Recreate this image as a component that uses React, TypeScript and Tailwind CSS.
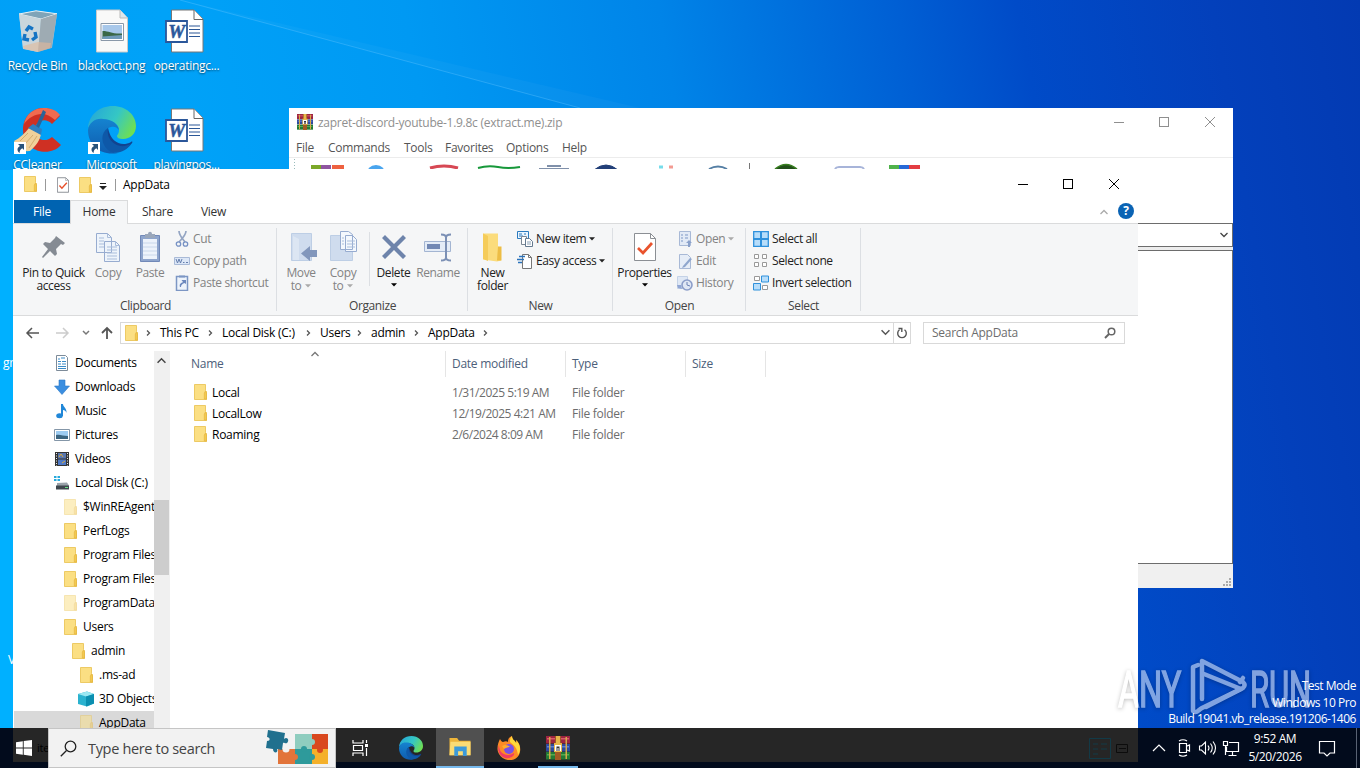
import type { ReactNode } from 'react';
import clsx from 'clsx';

type IconProps = { className?: string };

function Folder({ className, faded }: IconProps & { faded?: boolean }) {
  return (
    <svg viewBox="0 0 16 16" className={clsx('h-4 w-4 shrink-0', faded && 'opacity-50', className)} aria-hidden>
      <path d="M1.500.5h11v6l1 1v8h-12z" fill="#fbdf83" stroke="#e9c04c" strokeWidth=".8" />
      <path d="M11.300 15V9l1.200-2 1 2v6.200z" fill="#f3c94f" stroke="#e0b03c" strokeWidth=".6" />
    </svg>
  );
}

function Chevron({ dir = 'right', className }: IconProps & { dir?: 'right' | 'down' | 'up' }) {
  const paths = { right: 'M3 1.5 5.5 4 3 6.5', down: 'M.5 2 4 5.5 7.5 2', up: 'M.5 6 4 2.5 7.5 6' };
  return (
    <svg viewBox="0 0 8 8" className={clsx('h-2 w-2 shrink-0', className)} fill="none" stroke="currentColor" strokeWidth="1.3" aria-hidden>
      <path d={paths[dir]} />
    </svg>
  );
}

function Caret({ className }: IconProps) {
  return (
    <svg viewBox="0 0 6 4" className={clsx('h-[4px] w-[6px] shrink-0', className)} fill="currentColor" aria-hidden>
      <path d="M0 .3h6L3 3.5z" />
    </svg>
  );
}

function CheckPage({ className }: IconProps) {
  return (
    <svg viewBox="0 0 22 28" className={className} fill="none" aria-hidden>
      <path d="M.7.7h15l5.600 5v21.600H.7z" fill="#fff" stroke="#777c83" strokeWidth="1.500" />
      <path d="M15.700.7v5h5.600" stroke="#8a8f96" />
      <path d="m4.500 15 4.500 5L18 10" stroke="#e8502a" strokeWidth="2.500" />
    </svg>
  );
}

function WinRar({ className }: IconProps) {
  return (
    <svg viewBox="0 0 24 24" className={className} aria-hidden>
      <path fill="#9c2540" d="M0 0h24v7.500H0z" />
      <path fill="#2f4a9c" d="M0 8h24v7.500H0z" />
      <path fill="#237a34" d="M0 16h24v7.500H0z" />
      <path fill="#d85c6c" d="M1 2h22v1.500H1z" />
      <path fill="#5c7fd4" d="M1 10h22v1.500H1z" />
      <path fill="#58a84e" d="M1 18h22v1.500H1z" />
      <path fill="#d8a848" d="M3 1h1.500v22H3zM19.500 1H21v22h-1.500z" />
      <path fill="#a05a24" d="M9 0h6v24H9z" />
      <path fill="#e8b64a" d="M10 0h4v7h-4zM8 7h8v9H8z" />
      <path fill="#fff" d="M9 9h6v6H9z" />
      <path fill="#333" d="M10.500 10.500h3V15h-1v-3h-1v3h-1z" />
    </svg>
  );
}

function EdgeLogo({ className }: IconProps) {
  return (
    <svg viewBox="0 0 48 48" className={className} aria-hidden>
      <defs>
        <linearGradient id="edgeTop" x1="0" x2="1" y1=".2" y2=".6">
          <stop offset="0" stopColor="#25a7d8" />
          <stop offset=".55" stopColor="#35c7c4" />
          <stop offset="1" stopColor="#6fdf52" />
        </linearGradient>
        <linearGradient id="edgeLow" x1="0" x2="0" y1="0" y2="1">
          <stop offset="0" stopColor="#1583d0" />
          <stop offset="1" stopColor="#0f5cae" />
        </linearGradient>
      </defs>
      <path fill="url(#edgeTop)" d="M0 22C1 9 11 0 25 0c13 0 23 9 23 20 0 8-6 13-13 13-4 0-6-1-6-3 0-1 2-2 2-6 0-5-5-9-11-9C12 12 4 15 0 22z" />
      <path fill="url(#edgeLow)" d="M0 24c1-7 7-12 15-11 9 0 15 5 16 11-2-3-5-4-8-3-8 2-9 12-4 19 3 4 7 7 11 7C13 50 0 40 0 24z" />
      <path fill="#12438f" d="M20 22c-5 6-3 15 4 20 6 4 14 3 20-5 1-1 0-2-1-1-9 5-20 1-23-14z" />
      <path fill="#0e58a8" d="M20 22c-8 5-7 16 0 22 7 5 17 3 24-7-6 4-12 4-17 1-6-4-8-9-7-16z" />
    </svg>
  );
}

function WordDoc() {
  return (
    <svg viewBox="0 0 40 44" className="mr-[3px] h-11 w-10" aria-hidden>
      <path d="M6.500 1h22.500l9 9v33H6.500z" fill="#fff" stroke="#777" />
      <path d="M29 1v9.500h9" fill="#fff" stroke="#666" />
      <path d="M24 17h11M24 20.500h11M24 24h11M24 27.500h11" stroke="#2b5797" />
      <path d="M1 12h21v21H1z" fill="#fff" stroke="#2b579a" strokeWidth="1.800" />
      <text x="11.500" y="28.500" textAnchor="middle" fontFamily="Liberation Serif, serif" fontWeight="bold" fontStyle="italic" fontSize="19" fill="#2b579a" stroke="#2b579a" strokeWidth=".5">W</text>
    </svg>
  );
}

function PngFile() {
  return (
    <svg viewBox="0 0 32 44" className="h-11 w-8" aria-hidden>
      <path d="M.5 1H24l7.500 8v34H.5z" fill="#f9f9f8" stroke="#c9c9c9" />
      <path d="M24 1v8h7.500" fill="#dde7ec" stroke="#bbb" />
      <path d="M5 14.500h22.500v17H5z" fill="#fff" stroke="#8a98a8" />
      <path d="M6.500 16H26v14H6.500z" fill="#a8c8ea" />
      <path d="M6.500 22c7 0 9 3 19.500 2.500V30H6.500z" fill="#3b6847" />
      <path d="M6.500 27.500 26 26v4H6.500z" fill="#6f9ab8" />
    </svg>
  );
}

function RecycleBin() {
  return (
    <svg viewBox="0 0 40 44" className="mt-px h-11 w-10" aria-hidden>
      <path d="M1 4 18 .8l21 3-5 34-15 4L5 39z" fill="#b9c9d2" opacity=".9" />
      <path d="M1 4 18 .8l21 3L23 9z" fill="#7fa4b8" stroke="#e6f1f6" />
      <path d="M1 4 23 9l-3 33L5 38.500z" fill="#c9d6dc" />
      <path d="M23 9 39 4l-5.500 34L20 42z" fill="#9eabb3" />
      <path d="m5 36 15-4 13 1-1 5-12 4-14-3z" fill="#e2b99a" opacity=".6" />
      <g fill="none" stroke="#1474c4" strokeWidth="3.400">
        <path d="m8 21 3-4 4 2M17 22l1 5-4 3M11 30l-5-1 1-5" />
      </g>
    </svg>
  );
}

function ShortcutArrow() {
  return (
    <svg viewBox="0 0 12 12" className="absolute bottom-0 left-0 h-3 w-3" aria-hidden>
      <path d="M0 0h12v12H0z" fill="#fff" />
      <path d="M4 2h6v6L8.300 6.200C6 7.500 5.500 9 5.700 11 2.500 9 3 5.500 6 4z" fill="#28527a" />
    </svg>
  );
}

function CCleaner() {
  return (
    <svg viewBox="0 0 48 48" className="h-12 w-12" aria-hidden>
      <path d="M46 10 38 18c-6-7-17-4-17 6s11 13 17 7l9 8C36 52 9 46 9 24S34-5 46 10z" fill="#cf3023" />
      <path d="M10 18C12 8 20 2 30 2c7 0 12 2 16 7l-5 5C31 4 18 7 10 18z" fill="#f06b50" />
      <path d="M0 35c6-3 11-8 15-13l12 6c-1 6-5 12-11 17C9 46 3 42 0 35z" fill="#f0d09a" />
      <path d="m14 22 5-4 9 5-1 6z" fill="#2f7fc0" />
      <path d="M29 4 22 20l3 2 7-16z" fill="#2a6498" />
      <path d="m6 35 8-8M10 39l9-10M15 42l8-12" stroke="#d4ac6d" />
    </svg>
  );
}

function DesktopIcon({ label, className, children }: { label: string; className: string; children: ReactNode }) {
  return (
    <div className={clsx('absolute flex w-[75px] flex-col items-center text-white', className)}>
      <div className="relative flex h-12 items-center justify-center">{children}</div>
      <span className="mt-[3px] whitespace-nowrap leading-4 [text-shadow:0_1px_2px_rgba(0,0,0,.6)]">{label}</span>
    </div>
  );
}

function WindowButtons({ className }: IconProps) {
  return (
    <svg viewBox="0 0 138 30" className={clsx('h-[30px] w-[138px] shrink-0', className)} fill="none" stroke="currentColor" shapeRendering="crispEdges" aria-hidden>
      <path d="M18 15.500h10M63.500 10.500h9v9h-9z" />
      <path d="m109 10 10 10M119 10l-10 10" shapeRendering="auto" />
    </svg>
  );
}

function ArchiveWindow() {
  const menus = [
    { label: 'File', w: 'w-[32px]' },
    { label: 'Commands', w: 'w-[76px]' },
    { label: 'Tools', w: 'w-[41px]' },
    { label: 'Favorites', w: 'w-[61px]' },
    { label: 'Options', w: 'w-[56px]' },
    { label: 'Help', w: 'w-[40px]' },
  ];
  return (
    <div className="absolute left-[289px] top-[108px] flex h-[480px] w-[944px] flex-col bg-white">
      <div className="flex h-[29px] items-center justify-between pl-2 text-[#8f8f8f]">
        <div className="flex items-center gap-[5px]">
          <WinRar className="-mt-px h-4 w-4" />
          <span className="pt-px">zapret-discord-youtube-1.9.8c (extract.me).zip</span>
        </div>
        <WindowButtons className="-mr-px -mt-0.5" />
      </div>
      <div className="flex h-[21px] items-center border-b border-[#ececec] pl-[7px] pt-px text-[#555]">
        {menus.map((m) => (
          <span key={m.label} className={m.w}>{m.label}</span>
        ))}
      </div>
      <svg viewBox="0 0 944 12" className="h-3 w-full shrink-0" fill="none" aria-hidden>
        <path d="M5.500 1v10" stroke="#9bb" strokeDasharray="1 2" />
        <g strokeWidth="4">
          <path d="M22 9h10" stroke="#7ba829" /><path d="M32 9h10" stroke="#8f55a0" /><path d="M43 9h12" stroke="#ee6140" />
          <path d="M80 11q7-6 14 0" stroke="#4aa5ee" fill="#4aa5ee" strokeWidth="2" />
          <path d="M141 10q14-4 28 0" stroke="#d74854" strokeWidth="3" />
          <path d="M189 10q10-3 20-1t22 0" stroke="#17983a" strokeWidth="2" />
          <path d="M250 11h30M258 8h14" stroke="#8090aa" strokeWidth="2" />
          <path d="M305 12q12-10 24 0" stroke="#223f78" fill="#223f78" strokeWidth="1" />
          <path d="M370 9h4" stroke="#76dcea" strokeWidth="3" /><path d="M380 9h4" stroke="#f39b92" strokeWidth="3" />
          <path d="M420 11q9-5 18 0" stroke="#557fa4" strokeWidth="2" />
          <path d="M460.500 5v7" stroke="#777" strokeWidth="1" />
          <path d="M486 11q11-9 22 0" stroke="#398021" fill="#224f1a" strokeWidth="1.500" />
          <path d="M546 11q1-2 4-2h21q3 0 4 2" stroke="#a7b4d9" strokeWidth="2" />
          <path d="M600 9h10" stroke="#50b34b" /><path d="M610 9h10" stroke="#2769d7" /><path d="M620 9h11" stroke="#e33d42" />
        </g>
      </svg>
      <div className="h-[53px] shrink-0" />
      <div className="flex h-[24px] shrink-0 items-center justify-end border border-[#6d6d6d] pr-1">
        <Chevron dir="down" className="text-[#444]" />
      </div>
      <div className="h-[3px] shrink-0 bg-[#ededed]" />
      <div className="flex-1 border-y border-r border-[#6d6d6d]" />
      <div className="flex h-6 shrink-0 items-end justify-end bg-[#f0f0f0] p-px">
        <svg viewBox="0 0 9 9" className="h-[9px] w-[9px]" fill="#aaa" aria-hidden>
          <path d="M6 0h2v2H6zM6 3h2v2H6zM3 3h2v2H3zM0 6h2v2H0zM3 6h2v2H3zM6 6h2v2H6z" />
        </svg>
      </div>
    </div>
  );
}

// Ribbon

function Group({ label, className, children }: { label: string; className: string; children: ReactNode }) {
  return (
    <div className={clsx('relative flex shrink-0 flex-col', className)}>
      <div className="flex h-[73px] pt-1">{children}</div>
      <div className="text-center leading-[17px] text-[#444]">{label}</div>
      <div className="absolute bottom-1 right-0 top-1 w-px bg-[#dcdfe3]" />
    </div>
  );
}

function BigButton({ lines, className, disabled, caret, children }: { lines: string[]; className: string; disabled?: boolean; caret?: boolean; children: ReactNode }) {
  return (
    <div className={clsx('flex shrink-0 flex-col items-center pt-[3px]', disabled ? 'text-[#838383]' : 'text-[#222]', className)}>
      <svg viewBox="0 0 32 32" className="mb-[3px] h-8 w-8 shrink-0" fill="none" aria-hidden>{children}</svg>
      {lines.map((line, i) => (
        <span key={line} className="flex items-center gap-1 whitespace-nowrap leading-[13px]">
          {line}
          {caret && i > 0 && <Caret className="text-[#aaa]" />}
        </span>
      ))}
      {caret && lines.length === 1 && <Caret className="mt-1 text-black" />}
    </div>
  );
}

function SmallButton({ label, disabled, caret, children }: { label: string; disabled?: boolean; caret?: boolean; children: ReactNode }) {
  return (
    <div className={clsx('flex h-[22px] items-center gap-[3px] whitespace-nowrap', disabled ? 'text-[#838383]' : 'text-[#222]')}>
      <svg viewBox="0 0 16 16" className="h-4 w-4 shrink-0" fill="none" aria-hidden>{children}</svg>
      {label}
      {caret && <Caret className={disabled ? 'text-[#aaa]' : 'text-[#222]'} />}
    </div>
  );
}

function Ribbon() {
  return (
    <div className="flex h-[93px] shrink-0 border-y border-[#dadbdc] bg-[#f5f6f7] pl-px tracking-[-0.38px]">
      <Group label="Clipboard" className="w-[263px]">
        <BigButton lines={['Pin to Quick', 'access']} className="ml-1 w-[71px]">
          <path d="m18 5 9 7-2 2-2-1-5 5 1 5-2 2-5-5-7 7-1-1 6-8-5-5 2-2 5 1 5-5z" fill="#858b93" />
        </BigButton>
        <BigButton lines={['Copy']} className="w-[38px]" disabled>
          <path d="M4.500 2.500h11l4 4v15h-15zM12.500 10.500h11l4 4v16h-15z" fill="#eef4fb" stroke="#97acd0" />
          <path d="M15.500 2.500v4h4M23.500 10.500v4h4M7 7h5M7 10h5M7 13h5M7 16h5M15 16h10M15 19h10M15 22h10M15 25h10M15 28h10" stroke="#a9bddb" />
        </BigButton>
        <BigButton lines={['Paste']} className="w-[46px]" disabled>
          <path d="M6.500 4.500h19v26h-19z" fill="#8ea5cd" stroke="#7189b8" />
          <path d="M9 8h14v20H9z" fill="#edf3fb" /><path d="M9 12h14M9 16h14M9 20h14M9 24h14" stroke="#c9d7ea" />
          <path d="M11 3h3c0-3 4-3 4 0h3v4H11z" fill="#9aa7bb" />
        </BigButton>
        <div className="ml-px">
          <SmallButton label="Cut" disabled>
            <path d="M5 0c0 4 2 6 6 11M12 0c0 4-3 7-7 11" stroke="#94a5c3" strokeWidth="1.700" />
            <circle cx="4.500" cy="13" r="2.200" stroke="#7691c4" strokeWidth="1.300" /><circle cx="11.500" cy="13" r="2.200" stroke="#7691c4" strokeWidth="1.300" />
          </SmallButton>
          <SmallButton label="Copy path" disabled>
            <path d="M.5 4.500h15v7H.5z" fill="#dce7f7" stroke="#a9bad7" /><path d="m2 6 1.500 4L5 6l1.500 4L8 6M9 9.500h1.500M12 9.500h2" stroke="#657fae" />
          </SmallButton>
          <SmallButton label="Paste shortcut" disabled>
            <path d="M2.500 1.500h11v14h-11z" fill="#edf3fb" stroke="#7c96c4" strokeWidth="1.500" /><path d="M5 .5h6v2H5z" fill="#7c96c4" />
            <path d="M6 12c-1-3 1-4 3-5L7.500 5H12v4l-1.500-1C8 9 7 10 7 12z" fill="#6c88bd" />
          </SmallButton>
        </div>
      </Group>
      <Group label="Organize" className="w-[191px]">
        <BigButton lines={['Move', 'to']} className="ml-[3px] w-[42px]" disabled caret>
          <path d="M6.500 2.500h20v27h-20z" fill="#cfdcee" stroke="#bdcee5" /><path d="M8 29V5l6 3v21z" fill="#dce6f3" />
          <path d="M32 19v7h-7v4l-9-7.500 9-7.500v4z" fill="#8297bc" />
        </BigButton>
        <BigButton lines={['Copy', 'to']} className="w-[42px]" disabled caret>
          <path d="M3.500 4.500h22v25h-22z" fill="#cfdcee" stroke="#bdcee5" />
          <path d="M13.500.5h8l4 3v15h-12zM18.500 4.500h7l4 4v12h-11z" fill="#f4f8fd" stroke="#97acd0" />
          <path d="M20 10h8M20 13h8M20 16h8M15 7h2M15 10h2M15 13h2" stroke="#a9bddb" />
        </BigButton>
        <div className="ml-[5px] mt-1 h-[54px] w-px bg-[#dcdfe3]" />
        <BigButton lines={['Delete']} className="w-[47px]" caret>
          <path d="m4 7 3-3 9 9 9-9 3 3-9 9 9 9-3 3-9-9-9 9-3-3 9-9z" fill="#6e84ab" />
        </BigButton>
        <BigButton lines={['Rename']} className="w-[42px]" disabled>
          <path d="M2.500 10.500h26v10h-26z" fill="#e4ecf7" stroke="#a3b5d2" /><path d="M5 13h13v5H5z" fill="#7288b4" />
          <path d="M19 3.500c3 0 5 1 5 3v20c0 2-2 3-5 3M29 3.500c-3 0-5 1-5 3v20c0 2 2 3 5 3" stroke="#7c90b5" strokeWidth="2" />
        </BigButton>
      </Group>
      <Group label="New" className="w-[145px]">
        <BigButton lines={['New', 'folder']} className="w-[49px]">
          <path d="M6 2.500h15v13l3 2v12l-4 1-14-2z" fill="#fbdc7c" /><path d="M6 2.500 11 5v25l-5-2z" fill="#f5cc5a" /><path d="M21 15.500h3.500v14H20z" fill="#edbd45" />
        </BigButton>
        <div>
          <SmallButton label="New item" caret>
            <path d="M.5.5h11v7H.5z" fill="#eaf5ff" stroke="#2b7bbf" /><path d="M2 3h3M7 3h2M2 5h4" stroke="#2b7bbf" />
            <path d="M4.500 5.500h5v8h-5z" fill="#fff" stroke="#7b8794" /><path d="M8.500 7.500h4l3 3v5h-7z" fill="#fff" stroke="#64798f" /><path d="M10 11h4M10 13h4" stroke="#8aa0b5" />
          </SmallButton>
          <SmallButton label="Easy access" caret>
            <path d="M5.500 1.500h6l3 3v11h-9z" fill="#fff" stroke="#777" /><path d="M11.500 1.500v3h3" stroke="#777" />
            <path d="M2 3.500h6M0 6.500h7M1 9.500h4" stroke="#2b73bc" strokeWidth="1.300" />
          </SmallButton>
        </div>
      </Group>
      <Group label="Open" className="w-[133px]">
        <BigButton lines={['Properties']} className="w-[63px]" caret>
          <path d="M5.500 2.500h16l5 5v22h-21z" fill="#fff" stroke="#8b8f94" /><path d="M21.500 2.500v5h5" stroke="#8b8f94" />
          <path d="m9 17 5 5 9-10" stroke="#e9532d" strokeWidth="2.700" />
        </BigButton>
        <div className="ml-px">
          <SmallButton label="Open" disabled caret>
            <path d="M2.500.5h11v14h-11z" fill="#e2eaf6" stroke="#a8b9d6" /><path d="M4 4h2M4 7h2M4 10h2M8 4h3M8 7h3" stroke="#7d97c5" /><path d="M13 16v-4h2l-3-3-3 3h2v4" fill="#8aa1ca" />
          </SmallButton>
          <SmallButton label="Edit" disabled>
            <path d="M2.500 1.500h8l3 3v11h-11z" fill="#e6edf7" stroke="#a8b9d6" /><path d="m6 13 7-8 2 1-7 8-3 1z" fill="#8fa6cd" />
          </SmallButton>
          <SmallButton label="History" disabled>
            <path d="M.5 1.500h10v12H.5z" fill="#dfe8f5" stroke="#c4d2e7" /><circle cx="10" cy="10" r="5" fill="#dfe6f4" stroke="#8b9dc9" strokeWidth="1.600" /><path d="M10 7v3l3 1" stroke="#6c82b5" />
            <path d="M0 10h4l1 4-4-1z" fill="#91a6d4" />
          </SmallButton>
        </div>
      </Group>
      <Group label="Select" className="w-[115px]">
        <div className="ml-[7px]">
          <SmallButton label="Select all">
            <path d="M.7.7h14.600v14.600H.7z" fill="#b7ddfa" stroke="#2f91dc" strokeWidth="1.300" /><path d="M8 0v16M0 8h16" stroke="#2f91dc" strokeWidth="2" />
          </SmallButton>
          <SmallButton label="Select none">
            <path d="M1.500 1.500h4v4h-4zM9.500 1.500h4v4h-4zM1.500 9.500h4v4h-4zM9.500 9.500h4v4h-4z" fill="#fff" stroke="#999" />
          </SmallButton>
          <SmallButton label="Invert selection">
            <path d="M1.500 1.500h5v4h-5zM9.500 10.500h5v4h-5z" fill="#fff" stroke="#999" /><path d="M8.500 1h7v6h-7zM.5 8.500h7v6.500h-7z" fill="#b7ddfa" stroke="#2f91dc" />
          </SmallButton>
        </div>
      </Group>
    </div>
  );
}

function AddressBar() {
  const crumbs = [
    { label: 'This PC', w: 'w-[46px]' },
    { label: 'Local Disk (C:)', w: 'w-[82px]' },
    { label: 'Users', w: 'w-[35px]' },
    { label: 'admin', w: 'w-[41px]' },
    { label: 'AppData', w: 'w-[53px]' },
  ];
  return (
    <div className="flex h-[32px] shrink-0 items-center pt-px text-black">
      <svg viewBox="0 0 107 22" className="h-[22px] w-[107px] shrink-0" fill="none" stroke="#555" strokeWidth="1.500" aria-hidden>
        <path d="M26 11H14m5-5-5 5 5 5" />
        <path d="M43 11h12m-5-5 5 5-5 5" stroke="#ccc" />
        <path d="m70 9 3 3 3-3" stroke="#777" />
        <path d="M94 17V6m-5 5 5-5 5 5" strokeWidth="1.800" />
      </svg>
      <div className="flex h-[22px] w-[791px] items-center border border-[#d9d9d9] pl-[3px]">
        <Folder className="mr-[4px]" />
        <Chevron className="mr-[8px] text-[#555]" />
        {crumbs.map((c) => (
          <span key={c.label} className="flex items-center whitespace-nowrap">
            <span className={c.w}>{c.label}</span>
            <Chevron className="mr-[8px] text-[#555]" />
          </span>
        ))}
        <Chevron dir="down" className="ml-auto mr-[3px] h-[9px] w-[9px] text-[#555]" />
        <div className="flex h-full w-[17px] items-center justify-center border-l border-[#d9d9d9]">
          <svg viewBox="0 0 12 12" className="h-3 w-3" fill="none" stroke="#555" strokeWidth="1.400" aria-hidden>
            <path d="M8.500 2.800a4.300 4.300 0 1 1-5 0M2.500 1.500h3.300V5" />
          </svg>
        </div>
      </div>
      <div className="ml-3 flex h-[22px] w-[202px] items-center justify-between border border-[#d9d9d9] pl-2 pr-2 text-[#6d6d6d]">
        Search AppData
        <svg viewBox="0 0 12 12" className="h-3 w-3" fill="none" stroke="#666" strokeWidth="1.500" aria-hidden>
          <circle cx="7.500" cy="4.500" r="3.300" /><path d="M5 7 1 11" strokeWidth="1.900" />
        </svg>
      </div>
    </div>
  );
}

function TreeIcon({ kind }: { kind: string }) {
  return (
    <svg viewBox="0 0 16 16" className="h-4 w-4 shrink-0" fill="none" aria-hidden>
      {kind === 'documents' && (
        <>
          <path d="M2.500.5h9l2 2v13h-11z" fill="#fff" stroke="#7d8b99" />
          <path d="M4 4h2M7 3h4M4 6.500h3M8 6.500h4M4 9h3M8 9h4M4 11.500h8M4 13.500h8" stroke="#3b8bc8" />
        </>
      )}
      {kind === 'downloads' && <path d="M5 1h6v6h4.500L8 15.500.5 7H5z" fill="#3a8ee0" stroke="#2b78c7" strokeWidth=".6" />}
      {kind === 'music' && (
        <>
          <ellipse cx="5.500" cy="12.800" rx="3.300" ry="2.500" fill="#2087d8" />
          <path d="M7 1h2c0 3 4 4 3.500 9-.5-2-2-3-3.500-3v6H7z" fill="#2087d8" />
        </>
      )}
      {kind === 'pictures' && (
        <>
          <path d="M.5 2.500h15v11H.5z" fill="#fff" stroke="#8496a8" />
          <path d="M2 4h12v8H2z" fill="#9ccbf1" /><path d="M2 8c4-1 7 1 12 1v3H2z" fill="#3a6480" />
        </>
      )}
      {kind === 'videos' && (
        <>
          <path d="M1 1h14v14H1z" fill="#333" /><path d="M4 2h8v5.500H4z" fill="#5876ae" /><path d="M4 8.500h8V14H4z" fill="#4f79c5" />
          <path d="m5 6 2-3 2 3M8 12l3-2" stroke="#d7a941" /><path d="M2.500 2v13M13.500 2v13" stroke="#eee" strokeDasharray="1 1.500" />
        </>
      )}
      {kind === 'disk' && (
        <>
          <path d="M0 1h2.500v2H0zM3.500 1H6v2H3.500zM0 4h2.500v2H0zM3.500 4H6v2H3.500z" fill="#28aadc" />
          <path d="m3 8 10-.5 2 3v3.500H3z" fill="#9aa3aa" /><path d="M2 10.500h13v4H2z" fill="#3f464d" /><path d="M11 12.500h3" stroke="#64e083" />
        </>
      )}
      {kind === 'objects' && (
        <>
          <path d="m0 3 9-2.500L16 3v9.500L9 15.500 0 13z" fill="#2ab2cf" /><path d="m0 3 9-2.500L16 3 8 5.500z" fill="#9be8f2" /><path d="M8 5.500 16 3v9.500l-8 3z" fill="#0b8fb0" />
        </>
      )}
    </svg>
  );
}

const tree = [
  { label: 'Documents', kind: 'documents', pad: 'pl-[41px]' },
  { label: 'Downloads', kind: 'downloads', pad: 'pl-[41px]' },
  { label: 'Music', kind: 'music', pad: 'pl-[41px]' },
  { label: 'Pictures', kind: 'pictures', pad: 'pl-[41px]' },
  { label: 'Videos', kind: 'videos', pad: 'pl-[41px]' },
  { label: 'Local Disk (C:)', kind: 'disk', pad: 'pl-[41px]' },
  { label: '$WinREAgent', kind: 'hidden', pad: 'pl-[50px]' },
  { label: 'PerfLogs', kind: 'folder', pad: 'pl-[50px]' },
  { label: 'Program Files', kind: 'folder', pad: 'pl-[50px]' },
  { label: 'Program Files (x86)', kind: 'folder', pad: 'pl-[50px]' },
  { label: 'ProgramData', kind: 'hidden', pad: 'pl-[50px]' },
  { label: 'Users', kind: 'folder', pad: 'pl-[50px]' },
  { label: 'admin', kind: 'folder', pad: 'pl-[58px]' },
  { label: '.ms-ad', kind: 'folder', pad: 'pl-[66px]' },
  { label: '3D Objects', kind: 'objects', pad: 'pl-[65px]' },
  { label: 'AppData', kind: 'hidden', pad: 'pl-[65px]' },
];

const files = [
  { name: 'Local', date: '1/31/2025 5:19 AM' },
  { name: 'LocalLow', date: '12/19/2025 4:21 AM' },
  { name: 'Roaming', date: '2/6/2024 8:09 AM' },
];

function ExplorerWindow() {
  return (
    <div className="absolute left-[13px] top-[169px] flex h-[559px] w-[1125px] flex-col overflow-hidden bg-white">
      <div className="flex h-[31px] shrink-0 items-center pl-[10px] text-black">
        <Folder className="-mt-0.5" />
        <div className="ml-[6px] h-3 w-px bg-[#999]" />
        <CheckPage className="ml-[11px] h-4 w-3" />
        <Folder className="ml-[9px]" />
        <svg viewBox="0 0 8 8" className="ml-[5px] mt-1 h-2 w-2" fill="#222" aria-hidden><path d="M1 0h6v1H1zM0 3h8L4 7z" /></svg>
        <div className="ml-[8px] h-3 w-px bg-[#999]" />
        <span className="ml-[7px]">AppData</span>
        <WindowButtons className="-mt-px ml-auto" />
      </div>
      <div className="flex h-[23px] shrink-0 items-center pl-px text-[#333]">
        <div className="flex h-full w-[56px] items-center justify-center bg-[#0063b1] text-white">File</div>
        <div className="relative z-10 -mb-px flex h-6 w-[58px] items-center justify-center border-x border-t border-[#dadbdc] bg-[#f5f6f7] pb-px">Home</div>
        <span className="w-[59px] text-center">Share</span>
        <span className="w-[53px] text-center">View</span>
        <Chevron dir="up" className="ml-auto mr-[10px] text-[#aaa]" />
        <div className="mb-px mr-[4px] flex h-4 w-4 items-center justify-center rounded-full bg-[#0a63b4] text-[12px] font-bold text-white">?</div>
      </div>
      <Ribbon />
      <AddressBar />
      <div className="flex min-h-0 flex-1 pt-[3px]">
        <div className="w-[141px] overflow-hidden">
          {tree.map((node, i) => (
            <div key={node.label} className={clsx('flex h-6 items-center gap-[5px] whitespace-nowrap text-black', node.pad, i === tree.length - 1 && 'ml-px bg-[#d9d9d9]')}>
              {node.kind === 'folder' || node.kind === 'hidden' ? <Folder faded={node.kind === 'hidden'} className="-mr-px" /> : <TreeIcon kind={node.kind} />}
              {node.label}
            </div>
          ))}
        </div>
        <div className="flex w-[16px] flex-col items-center bg-[#f0f0f0]">
          <Chevron dir="up" className="mr-px mt-[5px] h-[9px] w-[9px] text-[#444]" />
          <div className="mr-px mt-[135px] h-[75px] w-[15px] shrink-0 bg-[#cdcdcd]" />
        </div>
        <div className="flex-1">
          <div className="relative flex h-[26px] items-center text-[#4c607a]">
            <Chevron dir="up" className="absolute left-[141px] -top-px text-[#777]" />
            <span className="w-[275px] pl-[21px]">Name</span>
            <span className="h-full w-[120px] border-l border-[#e5e5e5] pl-[6px] leading-[26px]">Date modified</span>
            <span className="h-full w-[120px] border-l border-[#e5e5e5] pl-[6px] leading-[26px]">Type</span>
            <span className="h-full w-[81px] border-x border-[#e5e5e5] pl-[6px] leading-[26px]">Size</span>
          </div>
          <div className="pt-[5px]">
            {files.map((f) => (
              <div key={f.name} className="flex h-[21px] items-center text-[#6d6d6d]">
                <div className="flex w-[282px] items-center gap-[3px] pl-[23px] text-black">
                  <Folder className="-mt-0.5" />
                  {f.name}
                </div>
                <span className="w-[120px] tracking-[-0.47px]">{f.date}</span>
                <span>File folder</span>
              </div>
            ))}
          </div>
        </div>
      </div>
    </div>
  );
}

function Watermark() {
  return (
    <svg viewBox="0 0 200 64" className="absolute left-[1114px] top-[656px] h-16 w-[200px] opacity-50 drop-shadow-[0_1px_2px_rgba(0,0,0,.5)]" fill="#fff" stroke="#fff" fontFamily="Roboto, sans-serif" fontSize="50" aria-hidden>
      <text x="4" y="51" textLength="63" lengthAdjust="spacingAndGlyphs" strokeWidth="1.500">ANY</text>
      <g fill="none" strokeWidth="4.500" strokeLinejoin="round" strokeLinecap="round">
        <path d="M84 9 79 11v44c4 3 5-1 9-3l41-20c2-2 2-4 0-6L88 5v38" /><path d="m90 18 37 15-35 18" /><path d="m129 22-3 4" />
      </g>
      <text x="136" y="51" textLength="61" lengthAdjust="spacingAndGlyphs" strokeWidth="1.500">RUN</text>
    </svg>
  );
}

function Taskbar() {
  return (
    <div className="absolute bottom-0 left-0 flex h-10 w-full items-stretch bg-[#020b1c] text-white">
      <div className="absolute left-[13px] top-0 h-[34px] w-[1125px] bg-[#262626]" />
      <div className="relative flex w-12 items-center">
        <svg viewBox="0 0 16 16" className="ml-4 h-4 w-4" fill="#fff" aria-hidden><path d="m0 2.200 6.800-1v6.300H0zM7.700 1.100 16 0v7.500H7.700zM0 8.400h6.800v6.400l-6.800-1zM7.700 8.400H16V16l-8.300-1.200z" /></svg>
        <span className="ml-[5px] w-[11px] overflow-hidden text-[11px] text-black">ite</span>
      </div>
      <div className="relative flex w-[288px] items-center border border-[#c5c5c5] bg-[#f2f2f2] pl-[11px] text-[#444]">
        <svg viewBox="0 0 17 17" className="h-[17px] w-[17px]" fill="none" stroke="#222" strokeWidth="1.300" aria-hidden><circle cx="10.500" cy="6.500" r="5.300" /><path d="M6.500 10.500.8 16.200" /></svg>
        <span className="ml-[11px] whitespace-nowrap pt-px text-[14.5px] tracking-[-0.33px]">Type here to search</span>
        <svg viewBox="0 0 64 36" className="absolute left-[217px] top-[1px] h-9 w-16" aria-hidden>
          <path d="M29 4h17v15H29z" fill="#8fcdbf" /><path d="M46 4h16v15H46z" fill="#d9481e" />
          <path d="M12 19h17v15H12z" fill="#e2743a" /><path d="M29 19h17v15H29z" fill="#2e9a9b" /><path d="M46 19h16v15H46z" fill="#f4b02a" />
          <circle cx="46" cy="12" r="3" fill="#8fcdbf" /><circle cx="38" cy="19" r="3" fill="#2e9a9b" /><circle cx="54" cy="20" r="3" fill="#d9481e" /><circle cx="46" cy="27" r="3" fill="#2e9a9b" /><circle cx="29" cy="27" r="3" fill="#e2743a" /><circle cx="20" cy="19" r="3.500" fill="#f2f2f2" />
          <path d="m2 0 17 3-1 6c3-3 6 1 3 4-2 1-3-1-4 0l-1 7-5-1c2 4-4 5-4 0l-7-1 1-7c4 0 3-4 0-4z" fill="#20708e" />
        </svg>
      </div>
      <div className="relative flex w-12 items-center justify-center">
        <svg viewBox="0 0 17 16" className="h-4 w-[17px]" fill="none" stroke="#fff" strokeWidth="1.200" aria-hidden><path d="M1 0v3h10V0M1 16v-3h10v3M1.500 5.500h9v5h-9zM14.500 0v3M14.500 8v8" /><path d="M13 4h3v3h-3z" fill="#fff" stroke="none" /></svg>
      </div>
      <div className="relative flex w-[52px] items-center justify-center pl-0.5"><EdgeLogo className="h-6 w-6" /></div>
      <div className="relative flex w-12 items-center justify-center border-b-2 border-[#76b9ed] bg-[#505050]">
        <svg viewBox="0 0 24 22" className="h-[21px] w-6" aria-hidden><path d="M1 1h8l2 3h12v15H1z" fill="#eeb53a" /><path d="M2 5h21v14H1z" fill="#fbdc75" /><path d="M6 10h13v10h-4v-5h-5v5H6z" fill="#3d9ad8" /></svg>
      </div>
      <div className="relative flex w-12 items-center justify-center pl-0.5">
        <svg viewBox="0 0 24 24" className="h-6 w-6" aria-hidden>
          <path d="M3 3c1 2 2 3 3 3 2-1 4-1 5 0 0-3 1-5 4-6 0 4 3 4 4 7 1-1 0-2 0-3 5 4 5 11 3 15-5 8-16 6-20-1C-1 13 1 7 3 3z" fill="#fd8b26" />
          <path d="M15 0c0 4 3 4 4 7 1-1 0-2 0-3 5 5 5 11 2 15-1-7-3-9-8-13 0-2 0-4 2-6z" fill="#ffd93b" />
          <path d="M2 9c0 10 9 12 15 8 1 3-4 6-9 5-6-2-8-8-6-13z" fill="#f23c62" /><circle cx="12" cy="13" r="5" fill="#7852e5" /><path d="M5 10c3-2 6-1 8 1-3 0-4 1-6 2z" fill="#ffad2c" />
        </svg>
      </div>
      <div className="relative ml-0.5 flex w-12 items-center justify-center">
        <WinRar className="h-6 w-6" />
        <div className="absolute bottom-0 left-1 h-[2px] w-10 bg-[#76b9ed]" />
      </div>
      <svg viewBox="0 0 44 24" className="relative ml-[505px] mt-2 h-6 w-11 shrink-0" fill="none" stroke="#123a47" aria-hidden><path d="M2.500 2.500h21v20h-21zM6 8h5M14 8h6M6 13h5M14 13h6M6 18h5" /><path d="M29.500 8.500h11v8h-11zM32 12.500h7" stroke="#0c0c0c" /></svg>
      <svg viewBox="0 0 94 24" className="absolute left-[1150px] top-2 h-6 w-[94px]" fill="none" stroke="#fff" strokeWidth="1.200" aria-hidden>
        <path d="m3 15 6-6 6 6" />
        <path d="M29.500 7.500h7v9h-7zM37 10l2.500-1v6L37 14M29 5q4-2.500 8 0M29 19q4 2.500 8 0" />
        <path d="M49.500 10h2l4-4v12l-4-4h-2zM58 9.500q2 2.500 0 5M60.500 7.500q3.500 4.500 0 9M63 5.500q5 6.500 0 13" strokeWidth="1.100" />
        <path d="M79 6.500h9.500v9h-12v-5M82.500 16v3M78.500 19.500h8M73.500 5.500h4v4h-4zM75.500 10v9" />
      </svg>
      <div className="absolute left-[1240px] top-[2px] w-[70px] text-center leading-[18px] tracking-[-0.4px]">
        <div>9:52 AM</div>
        <div>5/20/2026</div>
      </div>
      <svg viewBox="0 0 18 18" className="absolute left-[1318px] top-3 h-[18px] w-[18px]" fill="none" stroke="#fff" strokeWidth="1.200" aria-hidden><path d="M1.500 1.500h15v11.500H12L9 16l-3-3H1.500z" /></svg>
      <div className="absolute right-[3px] top-0 h-full w-px bg-[#596273]" />
    </div>
  );
}

export default function App() {
  return (
    <div className="relative h-[768px] w-[1360px] overflow-hidden bg-[linear-gradient(80deg,#009ff6_0%,#00a2f8_20%,#0099f3_36%,#0084e8_53%,#005fd4_69%,#004bc8_77%,#0340bb_90%,#033ab2_100%)] font-['Open_Sans',sans-serif] text-[12px] tracking-[-0.27px]">
      <div className="absolute left-0 top-[170px] h-[560px] w-4 bg-[#00b0ff]" />
      <svg viewBox="0 0 1360 110" className="absolute left-0 top-0 h-[110px] w-full" aria-hidden>
        <path d="m180 0 400 108h60z" fill="#fff" opacity=".03" />
        <path d="m180 0 400 108" stroke="#6cc8ff" opacity=".35" />
      </svg>
      <DesktopIcon label="Recycle Bin" className="left-0 top-[7px]"><RecycleBin /></DesktopIcon>
      <DesktopIcon label="blackoct.png" className="left-[74px] top-[7px]"><PngFile /></DesktopIcon>
      <DesktopIcon label="operatingc..." className="left-[149px] top-[7px]"><WordDoc /></DesktopIcon>
      <DesktopIcon label="CCleaner" className="left-0 top-[106px]"><CCleaner /><ShortcutArrow /></DesktopIcon>
      <DesktopIcon label="Microsoft" className="left-[74px] top-[106px]"><EdgeLogo className="h-12 w-12" /><ShortcutArrow /></DesktopIcon>
      <DesktopIcon label="playingpos..." className="left-[149px] top-[106px]"><WordDoc /></DesktopIcon>
      <span className="absolute left-[3px] top-[354px] text-white">gr</span>
      <span className="absolute left-[8px] top-[651px] text-white">V</span>
      <ArchiveWindow />
      <ExplorerWindow />
      <Watermark />
      <div className="absolute right-[4px] top-[678px] text-right leading-[16.500px] tracking-[-0.47px] text-white">
        <div>Test Mode</div>
        <div>Windows 10 Pro</div>
        <div>Build 19041.vb_release.191206-1406</div>
      </div>
      <Taskbar />
    </div>
  );
}
